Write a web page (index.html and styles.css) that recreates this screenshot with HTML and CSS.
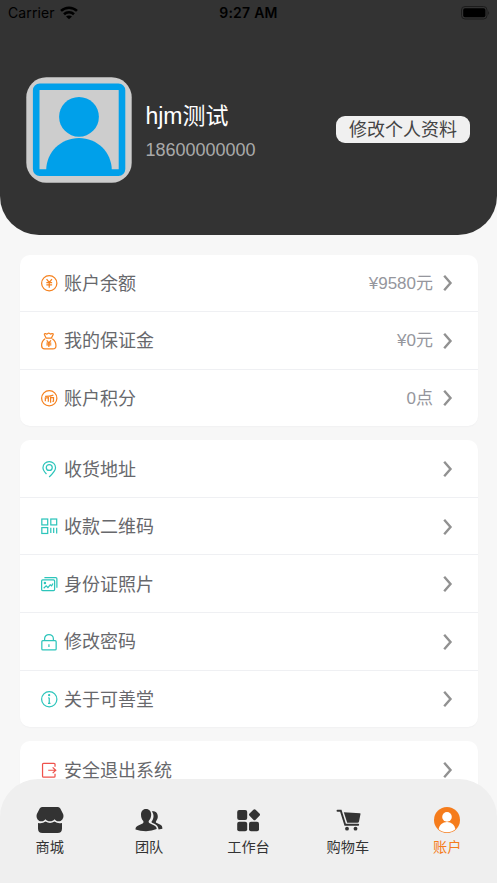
FILE: index.html
```html
<!DOCTYPE html>
<html lang="zh-CN">
<head>
<meta charset="utf-8">
<title>账户</title>
<link rel="stylesheet" href="styles.css">
</head>
<body>
<svg class="defs" width="0" height="0">
  <symbol id="chevron" viewBox="0 0 10 16"><path d="M1.200 .8 7.500 8 1.200 15.200" fill="none" stroke="currentColor" stroke-width="2.400"/></symbol>
</svg>
<div class="screen">
  <header class="hero">
    <div class="status">
      <div class="carrier"><span>Carrier</span>
        <svg width="18" height="14" viewBox="0 0 18 14"><g fill="none" stroke="#000" stroke-width="2.6"><path d="M1 4.900C5.500 .7 12.500 .7 17 4.900"/><path d="M4 8.200C6.800 5.600 11.200 5.600 14 8.200"/></g><path d="M9 13.300 6 10.500C7.600 9 10.400 9 12 10.500Z"/></svg>
      </div>
      <div class="time">9:27 AM</div>
      <div class="battery">
        <svg width="29" height="14" viewBox="0 0 29 14"><rect x=".5" y=".5" width="25.500" height="12.500" rx="3.500" fill="none" stroke="#1c1c1c"/><rect x="2.200" y="2.200" width="22.200" height="9.100" rx="1.800"/><path d="M27.300 4.700q1.600 2 0 4.200z" fill="#161616"/></svg>
      </div>
    </div>
    <div class="profile">
      <svg class="avatar" width="106" height="106" viewBox="0 0 106 106">
        <rect x=".3" y=".3" width="105.400" height="105.400" rx="20" fill="#cdcdcd"/>
        <rect x="10.200" y="9.800" width="85.800" height="85.800" rx="3.500" fill="none" stroke="#00a0ea" stroke-width="6.600"/>
        <circle cx="53" cy="39.800" r="19.900" fill="#00a0ea"/>
        <path d="M20.200 95V93.500C20.200 75 35 61 53 61S85.800 75 85.800 93.500V95Z" fill="#00a0ea"/>
      </svg>
      <div class="who"><div class="name">hjm测试</div><div class="phone">18600000000</div></div>
      <div class="edit">修改个人资料</div>
    </div>
  </header>

  <main class="list">
    <section class="card orange">
      <div class="row">
        <svg class="icon" viewBox="0 0 16 16"><circle cx="8" cy="8" r="7.400"/><path d="M5.400 3.900 8 7.200l2.600-3.300M8 7.200v5.100M5.200 7.300h5.600M5.200 9.600h5.600"/></svg>
        <span class="label">账户余额</span><span class="value">¥9580元</span><svg class="chev"><use href="#chevron"/></svg>
      </div>
      <div class="row">
        <svg class="icon" viewBox="0 0 16 16"><path d="M4.900 4.900 3.300 1.600Q3.200.5 4.400.5q1.300.9 2 .1 1.100-.9 2.200 0 .8.800 2-.1 1.600-.1 1.200 1L10.100 4.900ZM3.900 5.600C1.500 7.400.5 9.700.6 12.300c.1 2.100 1.200 3.100 3 3.100h7.900c1.900 0 3-1 3-3.100 0-2.600-1.100-4.900-3.500-6.700"/><path d="M5.500 7.100 7.600 9.600l2.100-2.500M7.600 9.600v4M5.200 9.800h4.800M5.200 11.600h4.800"/></svg>
        <span class="label">我的保证金</span><span class="value">¥0元</span><svg class="chev"><use href="#chevron"/></svg>
      </div>
      <div class="row">
        <svg class="icon" viewBox="0 0 16 16"><circle cx="8" cy="8" r="7.400"/><path d="M4 6.200q4.200 0 8-1.200M4.200 11V7.600h2.700M7.100 6v5.300M9.300 5.600v6.700M9.300 7.400h2.800v3.200q0 .6-1 .5"/></svg>
        <span class="label">账户积分</span><span class="value">0点</span><svg class="chev"><use href="#chevron"/></svg>
      </div>
    </section>

    <section class="card teal">
      <div class="row">
        <svg class="icon" viewBox="0 0 16 16"><path d="M5.300 12.600C3.300 10.500 1.900 8.800 1.900 6.500 1.900 3.100 4.500.6 8 .6s6.100 2.500 6.100 5.900c0 3-2.500 5.500-6.200 9"/><circle cx="8" cy="6.300" r="2.900"/></svg>
        <span class="label">收货地址</span><svg class="chev"><use href="#chevron"/></svg>
      </div>
      <div class="row">
        <svg class="icon" viewBox="0 0 16 16"><rect x=".8" y="1" width="5.700" height="5.700"/><rect x="9.500" y="1" width="5.700" height="5.700"/><rect x=".8" y="9.300" width="5.700" height="5.700"/><path d="M9.500 9.500v5M12.300 9.500v5M15.200 9.500v5.500"/></svg>
        <span class="label">收款二维码</span><svg class="chev"><use href="#chevron"/></svg>
      </div>
      <div class="row">
        <svg class="icon" viewBox="0 0 16 16"><rect x=".6" y="3.800" width="12.600" height="10.400" rx="1"/><path d="M3.300 1.500h11q1.100 0 1.100 1.100v8.700M2.600 11.900 5 9.600l1.700 1.600 2.200-2.700 1.400 1 1.300-2.200"/><circle cx="3.800" cy="6.700" r=".6" fill="currentColor"/></svg>
        <span class="label">身份证照片</span><svg class="chev"><use href="#chevron"/></svg>
      </div>
      <div class="row">
        <svg class="icon" viewBox="0 0 16 16"><rect x=".8" y="6.500" width="13.900" height="9" rx="1"/><path d="M3.500 6.300V4.600C3.500 2.200 5.300.5 7.700.5S12 2.200 12 4.600v1.700M7.700 10v2.500"/></svg>
        <span class="label">修改密码</span><svg class="chev"><use href="#chevron"/></svg>
      </div>
      <div class="row">
        <svg class="icon" viewBox="0 0 16 16"><circle cx="8" cy="8" r="7.400"/><path d="M8 6.500v5.800M7 6.600h1M6.800 12h2.400"/><circle cx="7.900" cy="4" r=".5" fill="currentColor"/></svg>
        <span class="label">关于可善堂</span><svg class="chev"><use href="#chevron"/></svg>
      </div>
    </section>

    <section class="card red">
      <div class="row">
        <svg class="icon" viewBox="0 0 16 16"><path d="M13.600 4.700V2.300q0-1-1-1H2.500q-1 0-1 1v11.400q0 1 1 1h10.100q1 0 1-1v-2.300M7 8h7.300M11.300 5.200 14.300 8l-3 2.800"/></svg>
        <span class="label">安全退出系统</span><svg class="chev"><use href="#chevron"/></svg>
      </div>
    </section>
  </main>

  <nav class="tabs">
    <div class="tab"><svg viewBox="0 0 28 28"><path d="M6 1h16q1.500 0 2.300 1.500l2.800 5.500c1.200 3-.7 7.300-4.400 7.300-2 0-3.200-1-4.200-2.100-1.200 1.300-2.400 2.100-4.500 2.100s-3.300-.8-4.500-2.100c-1 1.100-2.200 2.100-4.200 2.100C1.600 15.300-.3 11 .9 8l2.800-5.500Q4.500 1 6 1Z"/><path d="M2 17q4.300 1 7.500-1.400 4.500 2.800 9 0 3.200 2.400 7.500 1.400v5.500q0 4.500-4.500 4.500h-15Q2 27 2 22.500Z"/></svg><span>商城</span></div>
    <div class="tab"><svg viewBox="0 0 28 28"><path d="M11 3c3.400 0 5.200 2.500 5.200 5.800 0 2.700-1.100 4.500-2.200 5.700-.7.900-.4 2.200.7 2.800l4.600 2.100c1.700.8 2.400 2.100 2.400 3.700Q17 25.200 11 25.200T.5 23.400c0-1.700.6-2.900 2.300-3.700l4.800-2.200c1-.6 1.200-1.700.5-2.700C6.900 13.500 6 11.500 6 8.800 6 5.500 7.600 3 11 3Z"/><path d="M16.800 5.300c3.700-.7 6 1.700 6 5.100 0 2-.8 3.300-1.600 4.500-.7 1-.4 1.700.6 2.200l3.200 1.500c1.800.9 2.400 2 2.400 4.100l-3.800.7c-.6-2.600-1.600-4.200-3.800-5.300L17 16.700c-.8-.5-.7-1 0-1.700 2-2.700 2.200-6.600-.2-9.700Z"/></svg><span>团队</span></div>
    <div class="tab"><svg viewBox="0 0 28 28"><rect x="3.200" y="4" width="10" height="10" rx="2"/><rect x="3.200" y="15.700" width="10" height="9.500" rx="2"/><rect x="15" y="15.700" width="10" height="9.500" rx="2"/><rect x="16.200" y="4.400" width="8.600" height="8.600" rx="1.600" transform="rotate(45 20.500 8.700)"/></svg><span>工作台</span></div>
    <div class="tab"><svg viewBox="0 0 28 28"><path d="M3.500 4.700h3.300l4.400 14h13" fill="none" stroke="currentColor" stroke-width="1.900" stroke-linecap="round"/><path d="M9.800 6.300 26 7.300q.6.100.5.700L25 15.500q-.2 1.300-1.500 1.300H13.200Z"/><circle cx="13" cy="22.700" r="1.900"/><circle cx="21.500" cy="22.700" r="1.900"/></svg><span>购物车</span></div>
    <div class="tab active"><svg viewBox="0 0 28 28"><circle cx="14" cy="14" r="13"/><circle cx="14" cy="10.900" r="4.800" fill="#fff"/><path d="M5.600 23.300C6.500 19 9.500 16 14 16s7.500 3 8.400 7.300Q19 26.300 14 26.300T5.600 23.300Z" fill="#fff"/></svg><span>账户</span></div>
  </nav>
</div>
</body>
</html>
```
FILE: styles.css
```css
* { box-sizing: border-box; }
body { margin: 0; font-family: "Liberation Sans", "Noto Sans CJK SC", sans-serif; font-weight: 400; }
.defs { position: absolute; }
.screen { position: relative; width: 497px; height: 883px; overflow: hidden; background: #f7f7f7; }
.hero { height: 235px; background: #333; border-radius: 0 0 39px 39px; }
.status { display: grid; grid-template-columns: 1fr auto 1fr; height: 25px; padding: 0 7px 0 8px; align-items: center; font-family: Inter, sans-serif; font-size: 14px; color: #000; }
.carrier { display: flex; align-items: center; gap: 5px; font-weight: 400; letter-spacing: .100px; }
.time { margin-right: 1px; font-weight: 600; letter-spacing: .250px; }
.battery { display: flex; justify-content: flex-end; }
.profile { display: flex; align-items: center; margin-top: 51.700px; padding: 0 27px 0 26.400px; }
.who { margin-left: 13px; padding-top: 2px; }
.name { font-size: 23px; line-height: 34px; color: #fff; }
.phone { margin-top: 4px; font-size: 18px; line-height: 26px; color: #aaa; }
.edit { width: 134px; height: 27px; margin-left: auto; border-radius: 9px; background: #f0f0f0; color: #444; font-size: 18px; line-height: 28px; text-align: center; }
.list { display: flex; flex-direction: column; gap: 14px; padding: 19.500px 19.500px 0; }
.card { border-radius: 10px; background: #fff; box-shadow: 0 1px 1px #f1f1f2; }
.row { display: flex; align-items: center; height: 57.600px; padding: 0 24.500px 0 21px; border-bottom: 1px solid #eff0f3; }
.row:last-child { height: 56.600px; border-bottom: 0; }
.icon { width: 16.500px; height: 16.500px; margin-right: 7px; overflow: visible; fill: none; stroke: currentColor; stroke-width: 1.200; position: relative; top: .5px; }
.orange .icon { color: #f58220; }
.teal .icon { color: #2dc5bb; }
.red .icon { color: #ef514b; }
.label { padding-top: 2px; font-size: 18px; line-height: 28px; color: #67686c; }
.value { padding-top: 2px; margin-left: auto; font-size: 17px; line-height: 28px; color: #95969d; }
.chev { width: 10px; height: 16px; margin-left: auto; color: #919191; position: relative; top: .5px; }
.value + .chev { margin-left: 10px; }
.tabs { position: absolute; left: 0; right: 0; bottom: 0; display: grid; grid-template-columns: repeat(5, 1fr); height: 104.500px; padding-top: 27.500px; border-radius: 38px 38px 0 0; background: #efefef; }
.tab { display: flex; flex-direction: column; align-items: center; color: #333; font-size: 14.200px; line-height: 20px; }
.tab svg { width: 28px; height: 28px; margin-bottom: 3px; fill: currentColor; }
.tab.active { color: #f57c1c; }
```
